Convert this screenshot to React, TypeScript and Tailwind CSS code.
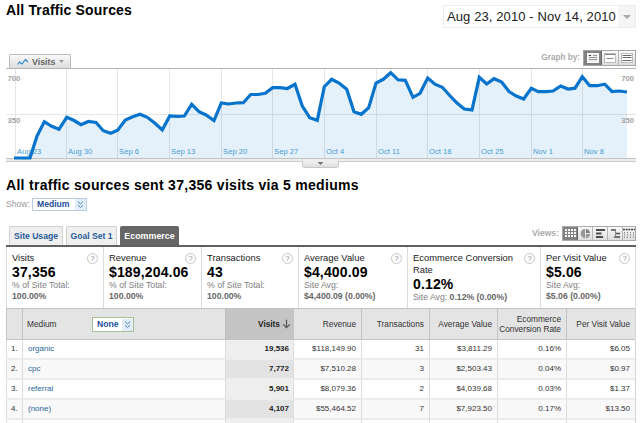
import React from "react";

const points =
  "14,158 30,158 37,136 44.3,121.7 51.7,126.3 59,129.3 66.7,117.3 73.7,120.3 81,124.7 88.3,121.5 96,122.5 103.3,130.7 110.7,133.3 117.7,130.3 125.3,120 132.7,116.7 140,114.3 147.3,117.3 154.7,123 162.3,130 169.7,116 177,116.4 184.3,116 191.7,104.3 199,111.7 206,115 214,120.5 221.3,103 228.7,104 236,103 243.3,102.7 250.7,94.5 258,94.5 265.3,93.3 272.7,87.7 280,87.7 287.3,88.5 295,84.3 302.3,106 309.7,117.7 317.3,120.3 324.3,86.7 331.7,79.3 339,83 346.7,89.3 354,111.7 361.3,114.3 368.7,107.7 376,83 383.3,79.3 390.7,72.7 398,79.8 405.3,80.3 413,97.3 420,93.3 427.7,78 435,84.2 442.3,87.3 449.7,95.5 457,103 464.3,109 472,109.9 479.3,77.3 486.7,84 494,78.7 501.7,82 509,91.5 516.3,96 523.7,99 531.3,88.3 538.3,91.7 545.7,91.7 553,91 560.7,86 568,89 575,88.2 582.3,76.7 589.7,85.7 597,85.7 604.7,84.2 612,91.5 619.3,91 627,92";

const weeks: [number, string][] = [
  [15, "Aug 23"],
  [66, "Aug 30"],
  [117, "Sep 6"],
  [169, "Sep 13"],
  [221, "Sep 20"],
  [272, "Sep 27"],
  [324, "Oct 4"],
  [376, "Oct 11"],
  [427, "Oct 18"],
  [479, "Oct 25"],
  [531, "Nov 1"],
  [582, "Nov 8"],
];

function Chart() {
  return (
    <svg width="630" height="100" viewBox="6 68 630 100" className="block shrink-0">
      <defs>
        <linearGradient id="handle" x1="0" y1="0" x2="0" y2="1">
          <stop offset="0" stopColor="#f2f2f2" />
          <stop offset="1" stopColor="#dcdcdc" />
        </linearGradient>
      </defs>
      {weeks.map(([x]) => (
        <rect key={x} x={x} y="69" width="1" height="89" fill="#e6e6e6" />
      ))}
      <rect x="6" y="114" width="630" height="1" fill="#e6e6e6" />
      <polygon points={`${points} 627,158 14,158`} fill="#0077cc" fillOpacity="0.1" />
      <rect x="6" y="68" width="630" height="1" fill="#b3b3b3" />
      <rect x="6" y="158" width="630" height="1" fill="#c4c4c4" />
      <rect x="6" y="159" width="630" height="2" fill="#ececec" />
      <rect x="6" y="161" width="630" height="1" fill="#cccccc" />
      <path d="M302.5 161V165.500Q302.500 167.500 304.500 167.500H336.500Q338.500 167.500 338.500 165.500V161Z" fill="url(#handle)" stroke="#c8c8c8" />
      <rect x="303" y="160" width="35" height="2" fill="#eeeeee" />
      <path d="M317.500 162H323.500L320.500 165Z" fill="#777777" />
      <g className="font-['Liberation_Sans',Arial,sans-serif] text-[7.7px]" fill="#4a9bd0">
        {weeks.map(([x, label]) => (
          <text key={label} x={x + 2} y="154.400">{label}</text>
        ))}
      </g>
      <polyline points={points} fill="none" stroke="#0673cc" strokeWidth="3.200" />
      <g className="font-['Liberation_Sans',Arial,sans-serif] text-[7.7px] font-bold" fill="#a3a3a3">
        <text x="7.500" y="80.500">700</text>
        <text x="7.500" y="123.200">350</text>
        <text x="634" y="80.500" textAnchor="end">700</text>
        <text x="634" y="123.200" textAnchor="end">350</text>
      </g>
    </svg>
  );
}

function Select({ label, className }: { label: string; className: string }) {
  return (
    <div className={`flex border bg-white ${className}`}>
      <span className="flex-1 pl-[4px] text-[8.6px] leading-[11px] font-bold text-[#1d4f9c]">{label}</span>
      <span className="flex w-[11px] items-center justify-center bg-[#e1edf8]">
        <svg width="7" height="8" viewBox="0 0 7 8" fill="none" stroke="#4a84bd" strokeWidth="1">
          <path d="M1 .7 3.500 3 6 .7M1 4.200 3.500 6.500 6 4.200" />
        </svg>
      </span>
    </div>
  );
}

function Help() {
  return (
    <span className="mt-px flex h-[11px] w-[11px] shrink-0 items-center justify-center rounded-full border border-[#c6c6c6] text-[7.5px] leading-[9px] text-[#8c8c8c]">
      ?
    </span>
  );
}

type Stat = { label: string; value: string; note: string; sub: string; inline?: boolean };
const stats: Stat[] = [
  { label: "Visits", value: "37,356", note: "% of Site Total:", sub: "100.00%" },
  { label: "Revenue", value: "$189,204.06", note: "% of Site Total:", sub: "100.00%" },
  { label: "Transactions", value: "43", note: "% of Site Total:", sub: "100.00%" },
  { label: "Average Value", value: "$4,400.09", note: "Site Avg:", sub: "$4,400.09 (0.00%)" },
  { label: "Ecommerce Conversion Rate", value: "0.12%", note: "Site Avg:", sub: "0.12% (0.00%)", inline: true },
  { label: "Per Visit Value", value: "$5.06", note: "Site Avg:", sub: "$5.06 (0.00%)" },
];

function StatCell({ s }: { s: Stat }) {
  return (
    <div className="border-l border-[#dcdcdc] pt-[5px] pr-[5px] pl-[5px]">
      <div className="flex justify-between">
        <span className="text-[9.4px] leading-[12px] text-[#222]">{s.label}</span>
        <Help />
      </div>
      <div className="text-[14px] leading-[16px] font-bold tracking-[0.15px] whitespace-nowrap text-black">{s.value}</div>
      <div className="text-[8.7px] leading-[11px] whitespace-nowrap text-[#808080]">
        {s.note}
        {s.inline ? " " : <br />}
        <b className="text-[#666]">{s.sub}</b>
      </div>
    </div>
  );
}

const rows = [
  ["1.", "organic", "19,536", "$118,149.90", "31", "$3,811.29", "0.16%", "$6.05"],
  ["2.", "cpc", "7,772", "$7,510.28", "3", "$2,503.43", "0.04%", "$0.97"],
  ["3.", "referral", "5,901", "$8,079.36", "2", "$4,039.68", "0.03%", "$1.37"],
  ["4.", "(none)", "4,107", "$55,464.52", "7", "$7,923.50", "0.17%", "$13.50"],
];

const cols = "grid grid-cols-[16px_203px_68px_68px_68px_68px_69px_69px]";

function Head({ children }: { children: React.ReactNode }) {
  return (
    <div className="flex items-center justify-end border-l border-[#c4c4c4] pr-[5px] text-right leading-[10px]">
      {children}
    </div>
  );
}

function Table() {
  return (
    <div className="shrink-0 border-r border-[#d4d4d4] text-[8px] text-[#333]">
      <div className={`${cols} h-[32px] border-y border-[#c4c4c4] bg-[#e4e4e4] text-[8.3px]`}>
        <div className="border-l border-[#c4c4c4]" />
        <div className="flex items-center border-l border-[#c4c4c4] pl-[4px]">
          <span className="w-[65px]">Medium</span>
          <Select label="None" className="h-[15px] w-[42px] border-[#a9bf95] pt-px" />
        </div>
        <div className="flex items-center justify-end border-l border-[#bbb] bg-[#c4c4c4] pr-[2px] font-bold text-[#222]">
          Visits
          <svg width="9" height="10" viewBox="0 0 9 10" className="ml-[2px]" fill="none" stroke="#555" strokeWidth="1.200">
            <path d="M4.500 .8V8.500M1.200 5.300 4.500 8.600 7.800 5.300" />
          </svg>
        </div>
        <Head>Revenue</Head>
        <Head>Transactions</Head>
        <Head>Average Value</Head>
        <Head>Ecommerce<br />Conversion Rate</Head>
        <Head>Per Visit Value</Head>
      </div>
      {rows.map((r, i) => (
        <div key={r[1]} className={`${cols} h-[20px] leading-[18px] ${i % 2 ? "bg-[#f9f9f9]" : "bg-white"}`}>
          {r.map((c, j) => (
            <div
              key={j}
              className={`border-b-2 border-l border-b-[#ededed] border-l-[#dcdcdc] ${
                j === 0
                  ? "pl-[4px]"
                  : j === 1
                    ? "pl-[5px] text-[#2b6699]"
                    : j === 2
                      ? `pr-[4px] text-right font-bold text-[#222] ${i % 2 ? "bg-[#e3e3e3]" : "bg-[#eeeeee]"}`
                      : "pr-[5px] text-right"
              }`}
            >
              {c}
            </div>
          ))}
        </div>
      ))}
      <div className={`${cols} h-[4px]`}>
        {rows[0].map((_, j) => (
          <div key={j} className={`border-l border-[#dcdcdc] ${j === 2 ? "bg-[#eeeeee]" : ""}`} />
        ))}
      </div>
    </div>
  );
}

const cell = "flex items-center justify-center border-r border-[#b5b5b5] bg-linear-to-b from-[#fafafa] to-[#dedede] last:border-r-0";
const activeCell = "flex items-center justify-center border-r border-[#666] bg-[#828282]";

function GraphBy() {
  return (
    <div className="grid h-[16px] w-[53px] grid-cols-[18px_17px_16px] border border-[#a5a5a5]">
      <span className={activeCell}>
        <svg width="12" height="10" viewBox="0 0 12 10">
          <rect x=".5" y=".5" width="11" height="9" fill="#eee" stroke="#fff" />
          <path d="M6 2.500H10M2 4.500H10M2 6.500H10" stroke="#999" />
          <path d="M2 2.500H4" stroke="#333" />
        </svg>
      </span>
      <span className={cell}>
        <svg width="12" height="10" viewBox="0 0 12 10">
          <rect x=".5" y=".5" width="11" height="9" fill="#fff" stroke="#bbb" />
          <path d="M1 1.500H11M2.500 5.500H9.500" stroke="#888" />
        </svg>
      </span>
      <span className={cell}>
        <svg width="12" height="10" viewBox="0 0 12 10">
          <rect x=".5" y=".5" width="11" height="9" fill="#fff" stroke="#bbb" />
          <path d="M1.500 2.500H10.500M1.500 4.500H10.500M1.500 7.500H10.500" stroke="#666" />
        </svg>
      </span>
    </div>
  );
}

function Views() {
  return (
    <div className="grid h-[15px] w-[74px] grid-cols-[15px_15px_15px_15px_12px] border border-[#aaa]">
      <span className={activeCell}>
        <svg width="11" height="11" viewBox="0 0 11 11">
          {[1, 4, 7].map((y) => (
            <path key={y} d={`M0 ${y + 1}H2M3 ${y + 1}H5M6 ${y + 1}H8M9 ${y + 1}H11`} stroke="#f4f4f4" strokeWidth="2" />
          ))}
        </svg>
      </span>
      <span className={cell}>
        <svg width="11" height="11" viewBox="0 0 11 11">
          <circle cx="5.500" cy="5.500" r="4.800" fill="#999" />
          <path d="M5.500 .7V5.500H10.300" stroke="#f0f0f0" fill="#777" />
          <path d="M5.500 5.500V10" stroke="#ddd" />
        </svg>
      </span>
      <span className={cell}>
        <svg width="11" height="11" viewBox="0 0 11 11">
          <path d="M1 2H10M1 5.500H6.500M1 9H8" stroke="#4d4d4d" strokeWidth="2" />
        </svg>
      </span>
      <span className={cell}>
        <svg width="11" height="11" viewBox="0 0 11 11" fill="none">
          <path d="M1 2H6M6 5.500H10M4 9H10" stroke="#4d4d4d" strokeWidth="1.700" />
          <path d="M5.500 2V9" stroke="#888" />
        </svg>
      </span>
      <span className={cell}>
        <svg width="12" height="11" viewBox="0 0 12 11">
          <path d="M0 1.500H12" stroke="#444" strokeWidth="1.500" strokeDasharray="2 .7" />
          <path d="M1.500 4V10M4.500 4V10M7.500 4V10M10.500 4V10" stroke="#888" strokeDasharray="1.300 1" />
        </svg>
      </span>
    </div>
  );
}

export default function App() {
  return (
    <div className="flex h-[423px] w-[640px] flex-col overflow-hidden bg-white pr-[4px] pl-[6px] font-['Liberation_Sans',Arial,sans-serif]">
      <div className="flex h-[50px] shrink-0 justify-between">
        <h1 className="pt-[2px] text-[14px] leading-[16px] font-bold tracking-[0.16px] text-black">All Traffic Sources</h1>
        <div className="mt-[5px] flex h-[23px] w-[193px] border border-[#ececec]">
          <span className="flex-1 pl-[3px] text-[13px] leading-[21px] tracking-[0.1px] whitespace-nowrap text-[#222]">Aug 23, 2010 - Nov 14, 2010</span>
          <span className="flex w-[17px] items-center justify-center bg-[#f5f5f5]">
            <svg width="8" height="4" viewBox="0 0 8 4"><path d="M0 0H8L4 4Z" fill="#aaa" /></svg>
          </span>
        </div>
      </div>
      <div className="flex h-[18px] shrink-0 justify-between">
        <div className="mt-[4px] ml-[3px] flex h-[14px] w-[62px] items-center rounded-t-[2px] border border-b-0 border-[#bbb] bg-linear-to-b from-[#f8f8f8] to-[#dedede] pl-[7px]">
          <svg width="12" height="8" viewBox="0 0 12 8" fill="none" stroke="#2f8ad4" strokeWidth="1.200">
            <path d="M.5 6.500 2.500 4 5 6 8.500 1.500 11 4" />
          </svg>
          <span className="ml-[3px] text-[8.8px] leading-[12px] font-bold text-[#666]">Visits</span>
          <svg width="5" height="3" viewBox="0 0 5 3" className="ml-[4px]"><path d="M0 0H5L2.500 3Z" fill="#999" /></svg>
        </div>
        <div className="flex items-start">
          <span className="mr-[3px] text-[8.2px] leading-[16px] font-bold text-[#aaa]">Graph by:</span>
          <GraphBy />
        </div>
      </div>
      <Chart />
      <h2 className="mt-[9px] h-[21px] shrink-0 text-[14px] leading-[16px] font-bold tracking-[0.29px] text-black">
        All traffic sources sent 37,356 visits via 5 mediums
      </h2>
      <div className="flex h-[28px] shrink-0">
        <span className="w-[26px] text-[8.6px] leading-[13px] text-[#999]">Show:</span>
        <Select label="Medium" className="h-[13px] w-[55px] border-[#b9cde0]" />
      </div>
      <div className="flex h-[21px] shrink-0 justify-between border-b-2 border-[#606060]">
        <div className="flex gap-[3px] pl-[3px] text-center text-[8.6px] leading-[18px] font-bold text-[#1f5c99]">
          <div className="w-[54px] rounded-t-[2px] border border-b-0 border-[#d0d0d0] bg-[#efefef]">Site Usage</div>
          <div className="w-[51px] rounded-t-[2px] border border-b-0 border-[#d0d0d0] bg-[#efefef]">Goal Set 1</div>
          <div className="w-[59px] rounded-t-[2px] bg-[#666] pt-px text-[8.9px] text-white">Ecommerce</div>
        </div>
        <div className="flex">
          <span className="mr-[3px] text-[8.6px] leading-[15px] font-bold text-[#aaa]">Views:</span>
          <Views />
        </div>
      </div>
      <div className="grid h-[61px] shrink-0 grid-cols-[97px_98px_97px_109px_133px_95px] border-r border-[#dcdcdc]">
        {stats.map((s) => (
          <StatCell key={s.label} s={s} />
        ))}
      </div>
      <Table />
    </div>
  );
}
